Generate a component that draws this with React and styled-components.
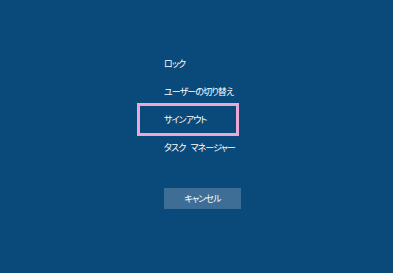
import React from 'react';
import styled, { createGlobalStyle } from 'styled-components';

const GlobalStyle = createGlobalStyle`
  html, body {
    margin: 0;
    padding: 0;
    background: #0a4a7b;
  }
`;

const OPTIONS = ['ロック', 'ユーザーの切り替え', 'サインアウト', 'タスク マネージャー'];

export default function App() {
  return (
    <>
      <GlobalStyle />
      <Screen>
        <Menu>
          {OPTIONS.map((label, i) => (
            <Option key={label} $focused={i === 2}>{label}</Option>
          ))}
        </Menu>
        <CancelButton type="button">キャンセル</CancelButton>
      </Screen>
    </>
  );
}

const Screen = styled.div`
  width: 393px;
  height: 273px;
  box-sizing: border-box;
  padding: 49px 0 0 137px;
  background: #0a4a7b;
  font-family: "Noto Sans CJK JP", "Noto Sans", sans-serif;
  font-feature-settings: "palt";
  color: #ffffff;
`;

const Menu = styled.div`
  display: flex;
  flex-direction: column;
  width: 102px;
`;

const Option = styled.div`
  box-sizing: border-box;
  height: 28px;
  display: flex;
  align-items: center;
  padding-left: 24px;
  font-size: 9px;
  letter-spacing: -0.9px;
  word-spacing: 4px;
  white-space: pre;
  border: 3px solid ${p => (p.$focused ? '#e9a9d6' : 'transparent')};
  ${p => p.$focused && 'height: 33px; margin: -2px 0 -3px;'}
`;

const CancelButton = styled.button`
  display: block;
  margin: 27px 0 0 27px;
  width: 77px;
  height: 21px;
  border: 0;
  padding: 0;
  background: #3e6d96;
  color: #ffffff;
  font-family: inherit;
  font-feature-settings: "palt";
  font-size: 9px;
  letter-spacing: -0.9px;
`;
